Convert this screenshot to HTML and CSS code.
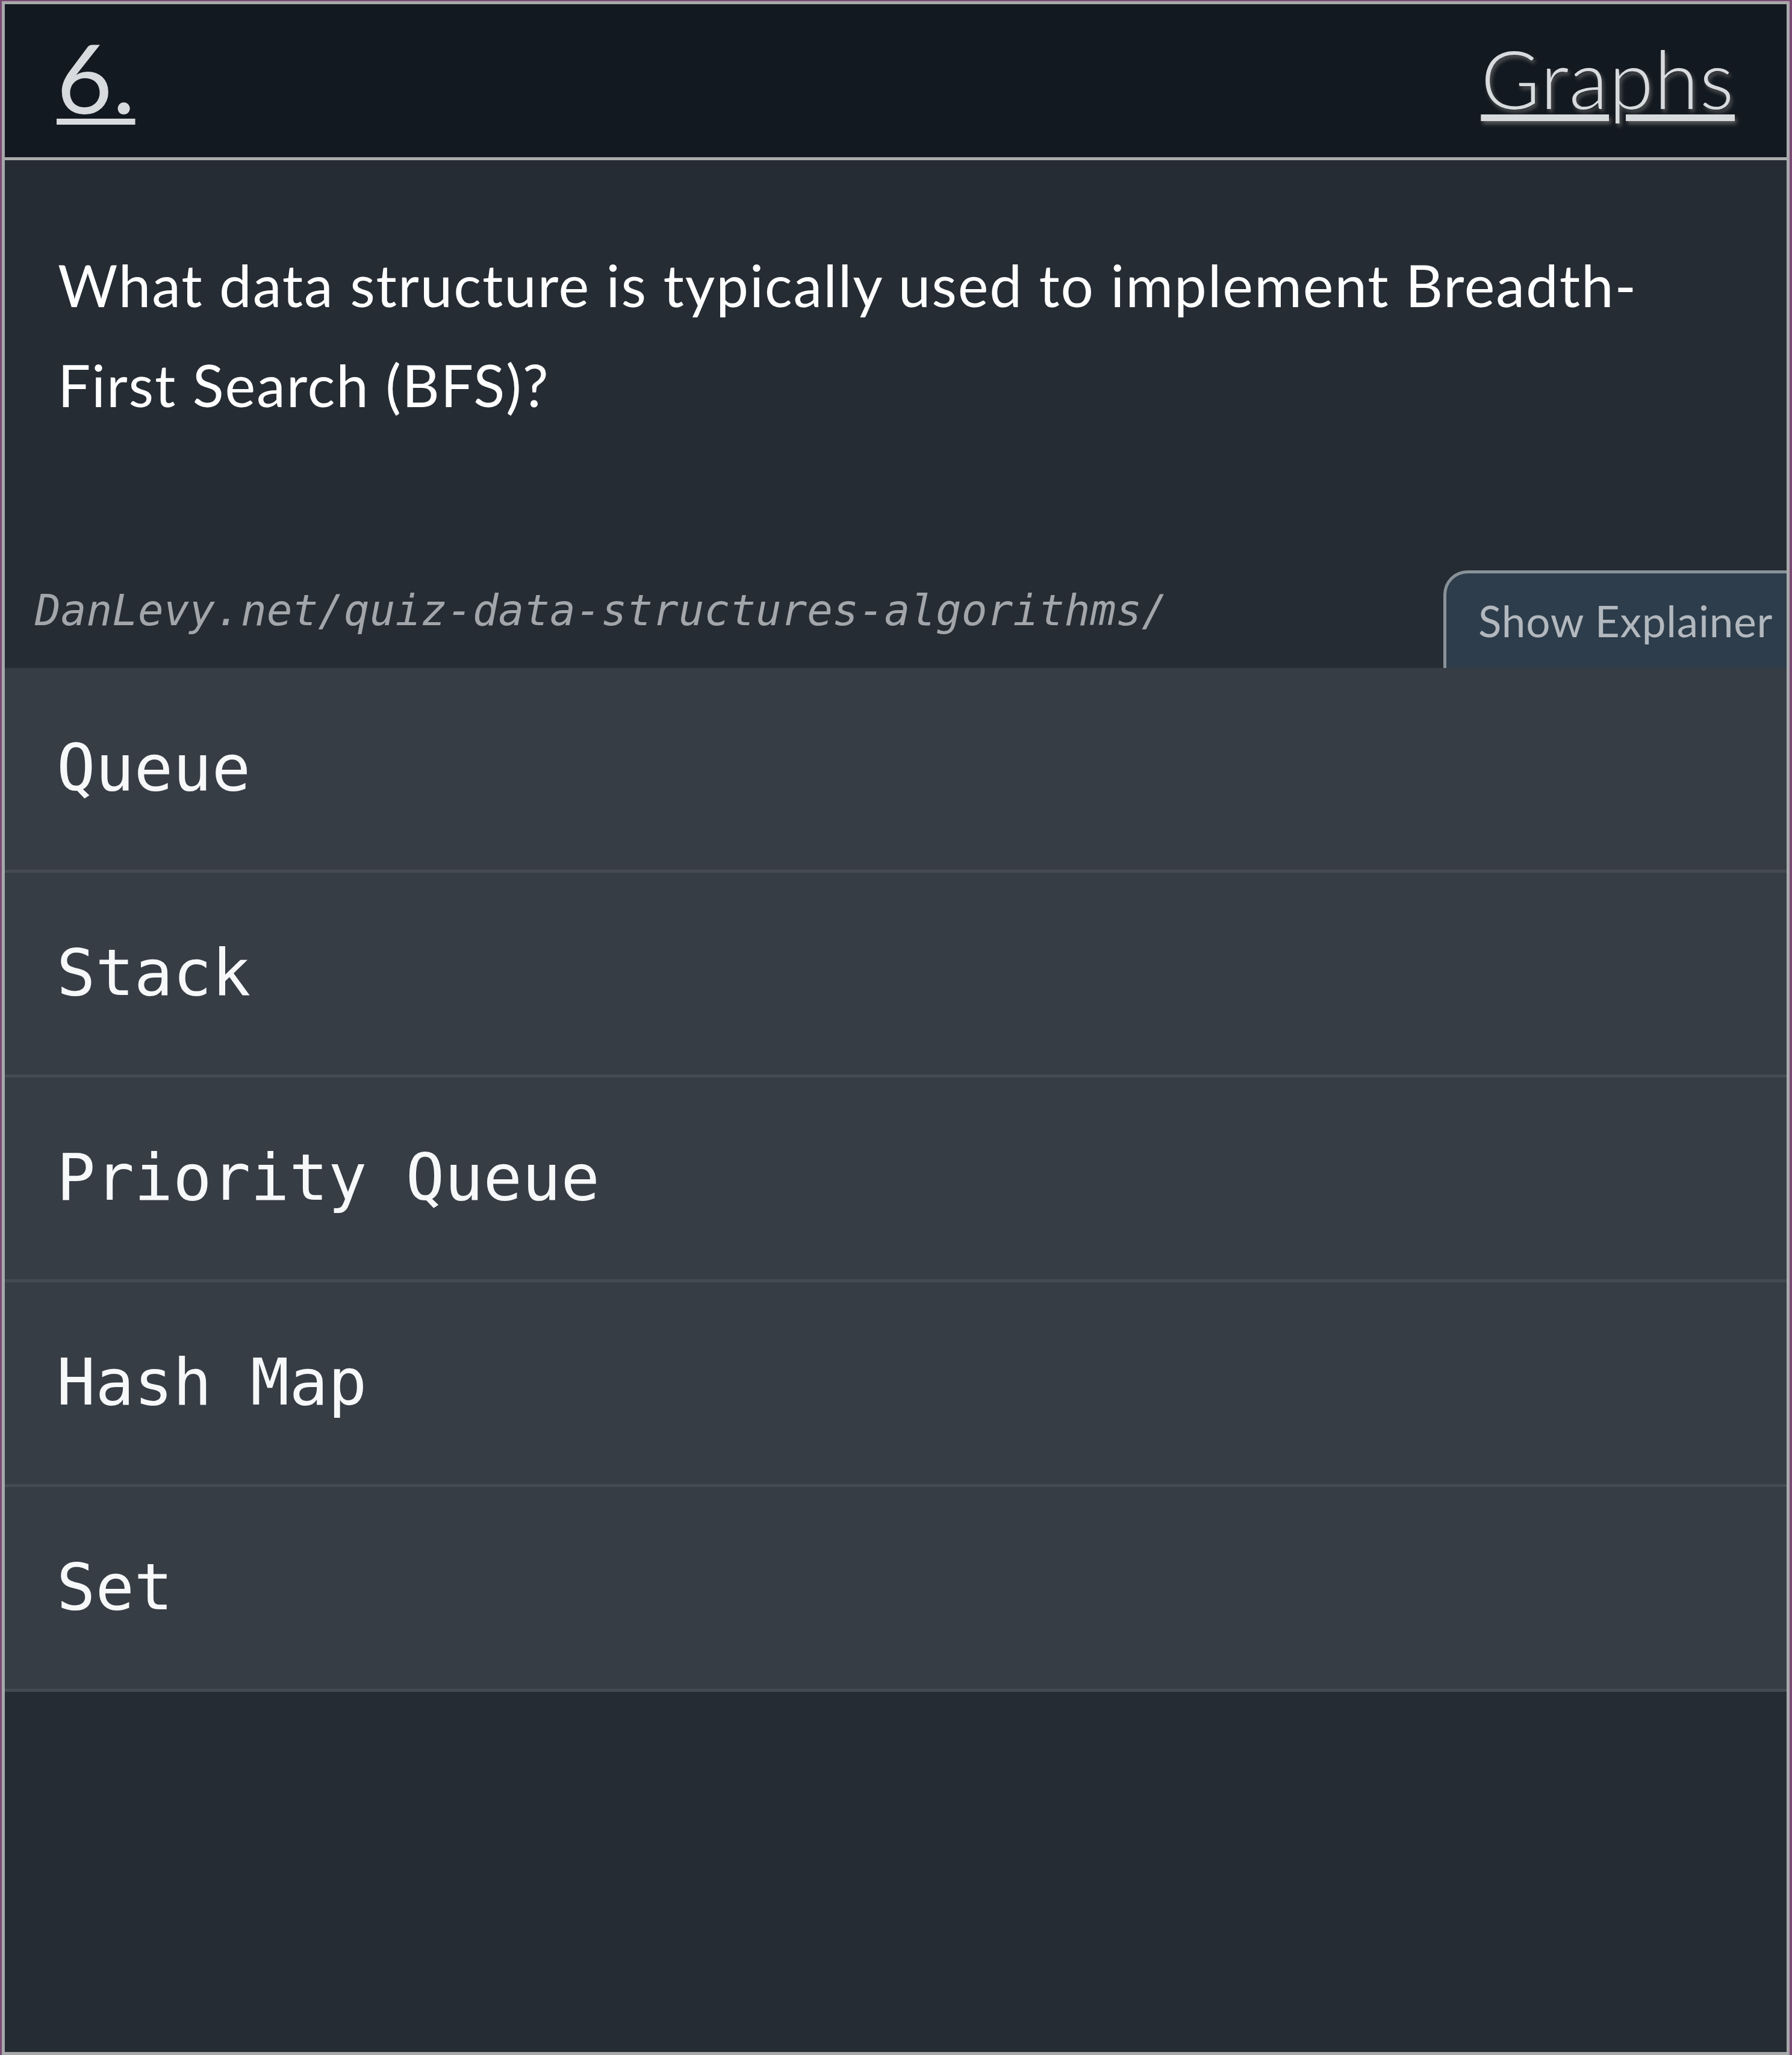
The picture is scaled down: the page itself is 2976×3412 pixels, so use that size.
FILE: index.html
```html
<!DOCTYPE html>
<html lang="en">
<head>
<meta charset="utf-8">
<title>Quiz 6 – Graphs</title>
<link rel="stylesheet" href="styles.css">
</head>
<body>
<div class="card">
  <header class="card-header">
    <a class="q-num" href="#">6.</a>
    <a class="q-cat" href="#">Graphs</a>
  </header>
  <section class="question">
    <p class="q-text">What data structure is typically used to implement Breadth-First Search (BFS)?</p>
  </section>
  <div class="meta">
    <span class="source">DanLevy.net/quiz-data-structures-algorithms/</span>
    <button class="explainer-btn">Show Explainer</button>
  </div>
  <ul class="answers">
    <li class="answer">Queue</li>
    <li class="answer">Stack</li>
    <li class="answer">Priority Queue</li>
    <li class="answer">Hash Map</li>
    <li class="answer">Set</li>
  </ul>
</div>
</body>
</html>
```
FILE: styles.css
```css
html, body {
  margin: 0;
  padding: 0;
}
body {
  background: #7a4a73;
  padding: 2px 4px 0 3px;
  overflow: hidden;
}
.card {
  box-sizing: border-box;
  height: 3410px;
  border: 5px solid #a6a8aa;
  background: #262c33;
  overflow: hidden;
  display: flex;
  flex-direction: column;
}
.card-header {
  box-sizing: border-box;
  height: 259px;
  background: #131920;
  border-bottom: 5px solid #a9abad;
  display: flex;
  justify-content: space-between;
  align-items: flex-start;
  padding: 0 86px 0 86px;
  font-family: Lato, "Open Sans", sans-serif;
}
.q-num {
  color: #d8dbde;
  font-size: 160px;
  font-weight: 400;
  line-height: 1.2;
  margin-top: 24px;
  text-decoration: underline;
  text-decoration-thickness: 10px;
  text-underline-offset: 8px;
}
.q-cat {
  color: #d8dbde;
  font-size: 134px;
  font-weight: 300;
  line-height: 1.2;
  margin-top: 43px;
  letter-spacing: 1.5px;
  text-decoration: underline;
  text-decoration-thickness: 11px;
  text-underline-offset: 9px;
  text-shadow: 3px 5px 6px rgba(95, 95, 95, 0.9);
}
.question {
  padding: 124px 88px 0 88px;
}
.q-text {
  margin: 0;
  color: #ffffff;
  font-family: Lato, "Open Sans", sans-serif;
  font-size: 96px;
  line-height: 166px;
  font-weight: 400;
  letter-spacing: 1.9px;
}
.meta {
  margin-top: 225px;
  height: 162px;
  display: flex;
  align-items: flex-end;
  justify-content: space-between;
}
.source {
  font-family: "DejaVu Sans Mono", monospace;
  font-style: italic;
  font-size: 71px;
  line-height: 71px;
  color: #a2a6aa;
  margin: 0 0 60px 50px;
  white-space: nowrap;
}
.explainer-btn {
  box-sizing: border-box;
  width: 570px;
  height: 162px;
  flex-shrink: 0;
  background: #2e3d4b;
  border: 5px solid #8a9299;
  border-right: none;
  border-bottom: none;
  border-radius: 40px 0 0 0;
  padding: 0 0 0 53px;
  text-align: left;
  white-space: nowrap;
  color: #b2b8be;
  font-family: Lato, "Open Sans", sans-serif;
  font-size: 71px;
  font-weight: 400;
  letter-spacing: 0.8px;
  cursor: pointer;
}
.answers {
  list-style: none;
  margin: 0;
  padding: 0;
}
.answer {
  box-sizing: border-box;
  height: 340px;
  background: #373d45;
  border-bottom: 5px solid #454b52;
  display: flex;
  align-items: center;
  padding-left: 86px;
  padding-bottom: 3px;
  color: #f7f8f9;
  font-family: "DejaVu Sans Mono", monospace;
  font-size: 107px;
  white-space: pre;
}
```
